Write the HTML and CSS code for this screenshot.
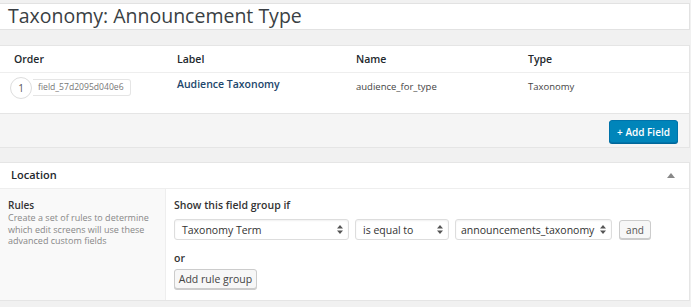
FILE: index.html
```html
<!DOCTYPE html>
<html>
<head>
<meta charset="utf-8">
<link rel="stylesheet" href="styles.css">
</head>
<body>
<div class="title-input">Taxonomy: Announcement Type</div>

<div class="panel fields">
  <div class="fields-head">
    <div class="c-order">Order</div>
    <div class="c-label">Label</div>
    <div class="c-name">Name</div>
    <div class="c-type">Type</div>
  </div>
  <div class="fields-row">
    <div class="c-order">
      <span class="num">1</span><span class="key">field_57d2095d040e6</span>
    </div>
    <div class="c-label"><a class="lbl">Audience Taxonomy</a></div>
    <div class="c-name cell">audience_for_type</div>
    <div class="c-type cell">Taxonomy</div>
  </div>
  <div class="fields-foot">
    <button class="btn-primary">+ Add Field</button>
  </div>
</div>

<div class="panel location">
  <div class="loc-head">
    <span>Location</span>
    <svg class="toggle" width="8" height="5" viewBox="0 0 8 5"><path d="M0 5 L4 0 L8 5 Z" fill="#888"/></svg>
  </div>
  <div class="loc-body">
    <div class="loc-label">
      <div class="rules-title">Rules</div>
      <p class="rules-desc">Create a set of rules to determine which edit screens will use these advanced custom fields</p>
    </div>
    <div class="loc-input">
      <div class="show-if">Show this field group if</div>
      <div class="rule">
        <div class="select s1"><span>Taxonomy Term</span><svg class="arr" width="6" height="9" viewBox="0 0 6 9"><path d="M0 3.5 L3 0 L6 3.5 Z M0 5.5 L3 9 L6 5.5 Z" fill="#555"/></svg></div>
        <div class="select s2"><span>is equal to</span><svg class="arr" width="6" height="9" viewBox="0 0 6 9"><path d="M0 3.5 L3 0 L6 3.5 Z M0 5.5 L3 9 L6 5.5 Z" fill="#555"/></svg></div>
        <div class="select s3"><span>announcements_taxonomy</span><svg class="arr" width="6" height="9" viewBox="0 0 6 9"><path d="M0 3.5 L3 0 L6 3.5 Z M0 5.5 L3 9 L6 5.5 Z" fill="#555"/></svg></div>
        <button class="btn and">and</button>
      </div>
      <div class="or">or</div>
      <button class="btn add-group">Add rule group</button>
    </div>
  </div>
</div>
</body>
</html>
```
FILE: styles.css
```css
* { box-sizing: border-box; }
html, body { margin: 0; padding: 0; }
body {
  background: #f1f1f1;
  font-family: "Open Sans", "Liberation Sans", sans-serif;
  color: #444;
  width: 691px;
  height: 307px;
  overflow: hidden;
  padding-top: 3px;
}
.title-input {
  margin-left: -1px;
  width: 691px;
  height: 27px;
  background: #fff;
  border: 1px solid #e2e2e2;
  font-size: 19.5px;
  line-height: 24px;
  padding-left: 8px;
  color: #3a3f44;
}
.panel {
  margin-left: -1px;
  width: 691px;
  background: #fff;
  border: 1px solid #e5e5e5;
}
.fields { margin-top: 15px; }
.fields-head, .fields-row {
  display: flex;
}
.fields-head {
  height: 27px;
  border-bottom: 1px solid #eee;
  font-size: 10.5px;
  font-weight: 600;
  color: #23282d;
  align-items: center;
}
.c-order { width: 177px; padding-left: 14px; }
.c-label { width: 179px; }
.c-name { width: 172px; }
.c-type { flex: 1; }
.fields-row {
  height: 40px;
  font-size: 9.5px;
}
.fields-row .c-order {
  padding-left: 10px;
  display: flex;
  align-items: flex-start;
  padding-top: 4px;
}
.num {
  width: 22px;
  height: 22px;
  border: 1px solid #ddd;
  border-radius: 50%;
  display: flex;
  align-items: center;
  justify-content: center;
  font-size: 10px;
  color: #555;
}
.key {
  margin-left: 1px;
  margin-top: 2px;
  height: 17px;
  width: 98px;
  border: 1px solid #e5e5e5;
  border-left: none;
  border-radius: 0 3px 3px 0;
  font-size: 8.6px;
  line-height: 15px;
  padding-left: 5px;
  color: #777;
  white-space: nowrap;
}
.lbl {
  display: block;
  padding-top: 4px;
  font-size: 10.5px;
  font-weight: 600;
  color: #21466b;
}
.cell {
  padding-top: 7px;
  font-size: 9.5px;
  color: #444;
}
.fields-foot {
  height: 34px;
  background: #f5f5f5;
  border-top: 1px solid #e5e5e5;
  display: flex;
  justify-content: flex-end;
  align-items: center;
  padding-right: 11px;
}
.btn-primary {
  font-family: inherit;
  height: 23px;
  width: 69px;
  padding: 0;
  background: #0085ba;
  border: 1px solid #0073aa;
  border-radius: 3px;
  box-shadow: 0 1px 0 #006799;
  color: #fff;
  font-size: 10px;
  font-weight: 600;
  margin-top: 2px;
}
.location { margin-top: 14px; }
.loc-head {
  height: 26px;
  border-bottom: 1px solid #eee;
  display: flex;
  align-items: center;
  justify-content: space-between;
  padding: 0 14px 2px 11px;
  font-size: 11px;
  font-weight: 600;
  color: #23282d;
}
.toggle { margin-top: 1px; }
.loc-body {
  display: flex;
  height: 111px;
}
.loc-label {
  width: 166px;
  background: #f9f9f9;
  border-right: 1px solid #eee;
  padding: 9px 8px 0 8px;
}
.rules-title {
  font-size: 10px;
  font-weight: 600;
  color: #333;
  line-height: 14px;
}
.rules-desc {
  margin: 0;
  font-size: 9px;
  line-height: 11.5px;
  color: #888;
}
.loc-input {
  flex: 1;
  padding: 10px 0 0 8px;
}
.show-if {
  font-size: 10.5px;
  font-weight: 600;
  color: #333;
  line-height: 13px;
}
.rule {
  display: flex;
  align-items: center;
  margin-top: 7px;
}
.select {
  height: 21px;
  border: 1px solid #ddd;
  border-radius: 3px;
  box-shadow: inset 0 1px 2px rgba(0,0,0,0.06);
  display: flex;
  align-items: center;
  justify-content: space-between;
  padding: 0 5px 0 7px;
  font-size: 10.5px;
  color: #333;
  margin-right: 6px;
  white-space: nowrap;
}
.s1 { width: 175px; }
.s2 { width: 94px; }
.s3 { width: 157px; padding-left: 5px; }
.btn {
  font-family: inherit;
  background: #f7f7f7;
  border: 1px solid #ccc;
  border-radius: 3px;
  box-shadow: 0 1px 0 #ccc;
  color: #555;
  padding: 0;
}
.and {
  height: 19px;
  width: 32px;
  font-size: 10px;
  margin-left: 1px;
}
.or {
  margin-top: 12px;
  font-size: 10.5px;
  font-weight: 600;
  color: #333;
  line-height: 13px;
}
.add-group {
  margin-top: 4px;
  height: 20px;
  width: 83px;
  font-size: 10.5px;
  color: #444;
}
```
